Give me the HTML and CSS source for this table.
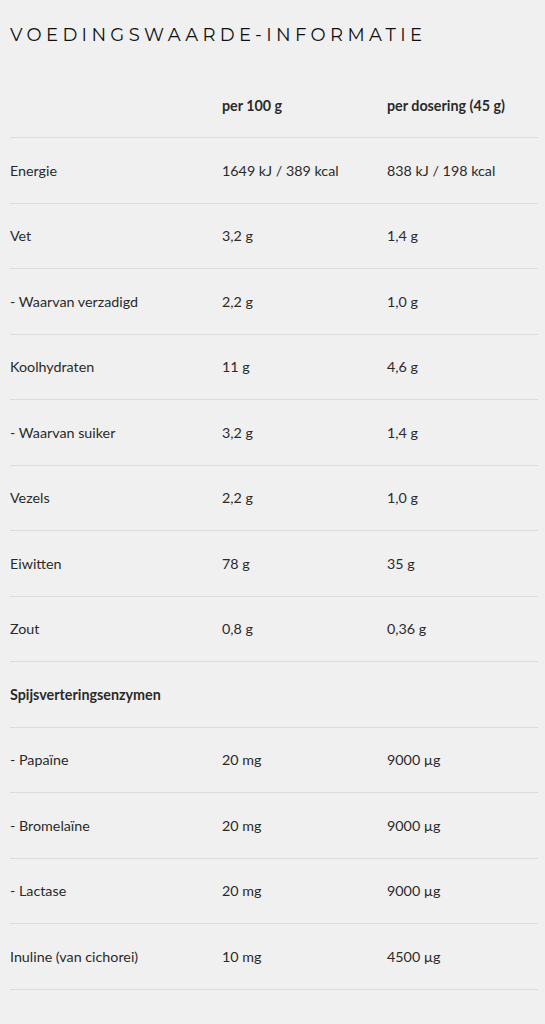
FILE: index.html
```html
<!DOCTYPE html>
<html lang="nl">
<head>
<meta charset="utf-8">
<link rel="stylesheet" href="styles.css">
</head>
<body>
<div class="page">
  <h2 class="title">VOEDINGSWAARDE-INFORMATIE</h2>
  <table class="nutri">
    <thead>
      <tr><th></th><th>per 100 g</th><th>per dosering (45 g)</th></tr>
    </thead>
    <tbody>
      <tr><td>Energie</td><td>1649 kJ / 389 kcal</td><td>838 kJ / 198 kcal</td></tr>
      <tr><td>Vet</td><td>3,2 g</td><td>1,4 g</td></tr>
      <tr><td>- Waarvan verzadigd</td><td>2,2 g</td><td>1,0 g</td></tr>
      <tr><td>Koolhydraten</td><td>11 g</td><td>4,6 g</td></tr>
      <tr><td>- Waarvan suiker</td><td>3,2 g</td><td>1,4 g</td></tr>
      <tr><td>Vezels</td><td>2,2 g</td><td>1,0 g</td></tr>
      <tr><td>Eiwitten</td><td>78 g</td><td>35 g</td></tr>
      <tr><td>Zout</td><td>0,8 g</td><td>0,36 g</td></tr>
      <tr class="section"><td>Spijsverteringsenzymen</td><td></td><td></td></tr>
      <tr><td>- Papaïne</td><td>20 mg</td><td>9000 µg</td></tr>
      <tr><td>- Bromelaïne</td><td>20 mg</td><td>9000 µg</td></tr>
      <tr><td>- Lactase</td><td>20 mg</td><td>9000 µg</td></tr>
      <tr><td>Inuline (van cichorei)</td><td>10 mg</td><td>4500 µg</td></tr>
    </tbody>
  </table>
</div>
</body>
</html>
```
FILE: styles.css
```css
html, body {
  margin: 0;
  padding: 0;
  background: #f0f0f0;
}
.page {
  padding: 23px 7px 0 10px;
  color: #2a2a2a;
  font-family: "Lato", "Noto Sans", sans-serif;
}
.title {
  margin: 0;
  font-family: "Montserrat", "Liberation Sans", sans-serif;
  font-weight: 400;
  font-size: 18px;
  line-height: 24px;
  letter-spacing: 4.35px;
  color: #111;
}
.nutri {
  width: 100%;
  border-collapse: collapse;
  margin-top: 26px;
  font-size: 14.3px;
}
.nutri th, .nutri td {
  text-align: left;
  padding: 0;
  height: 64px;
  vertical-align: middle;
  border-bottom: 1.5px solid #dcdcdc;
}
.nutri td { height: 64.5px; }
.nutri th {
  font-weight: 700;
}
.nutri th:first-child, .nutri td:first-child { width: 212px; }
.nutri th:nth-child(2), .nutri td:nth-child(2) { width: 165px; }
.section td:first-child { font-weight: 700; }
```
